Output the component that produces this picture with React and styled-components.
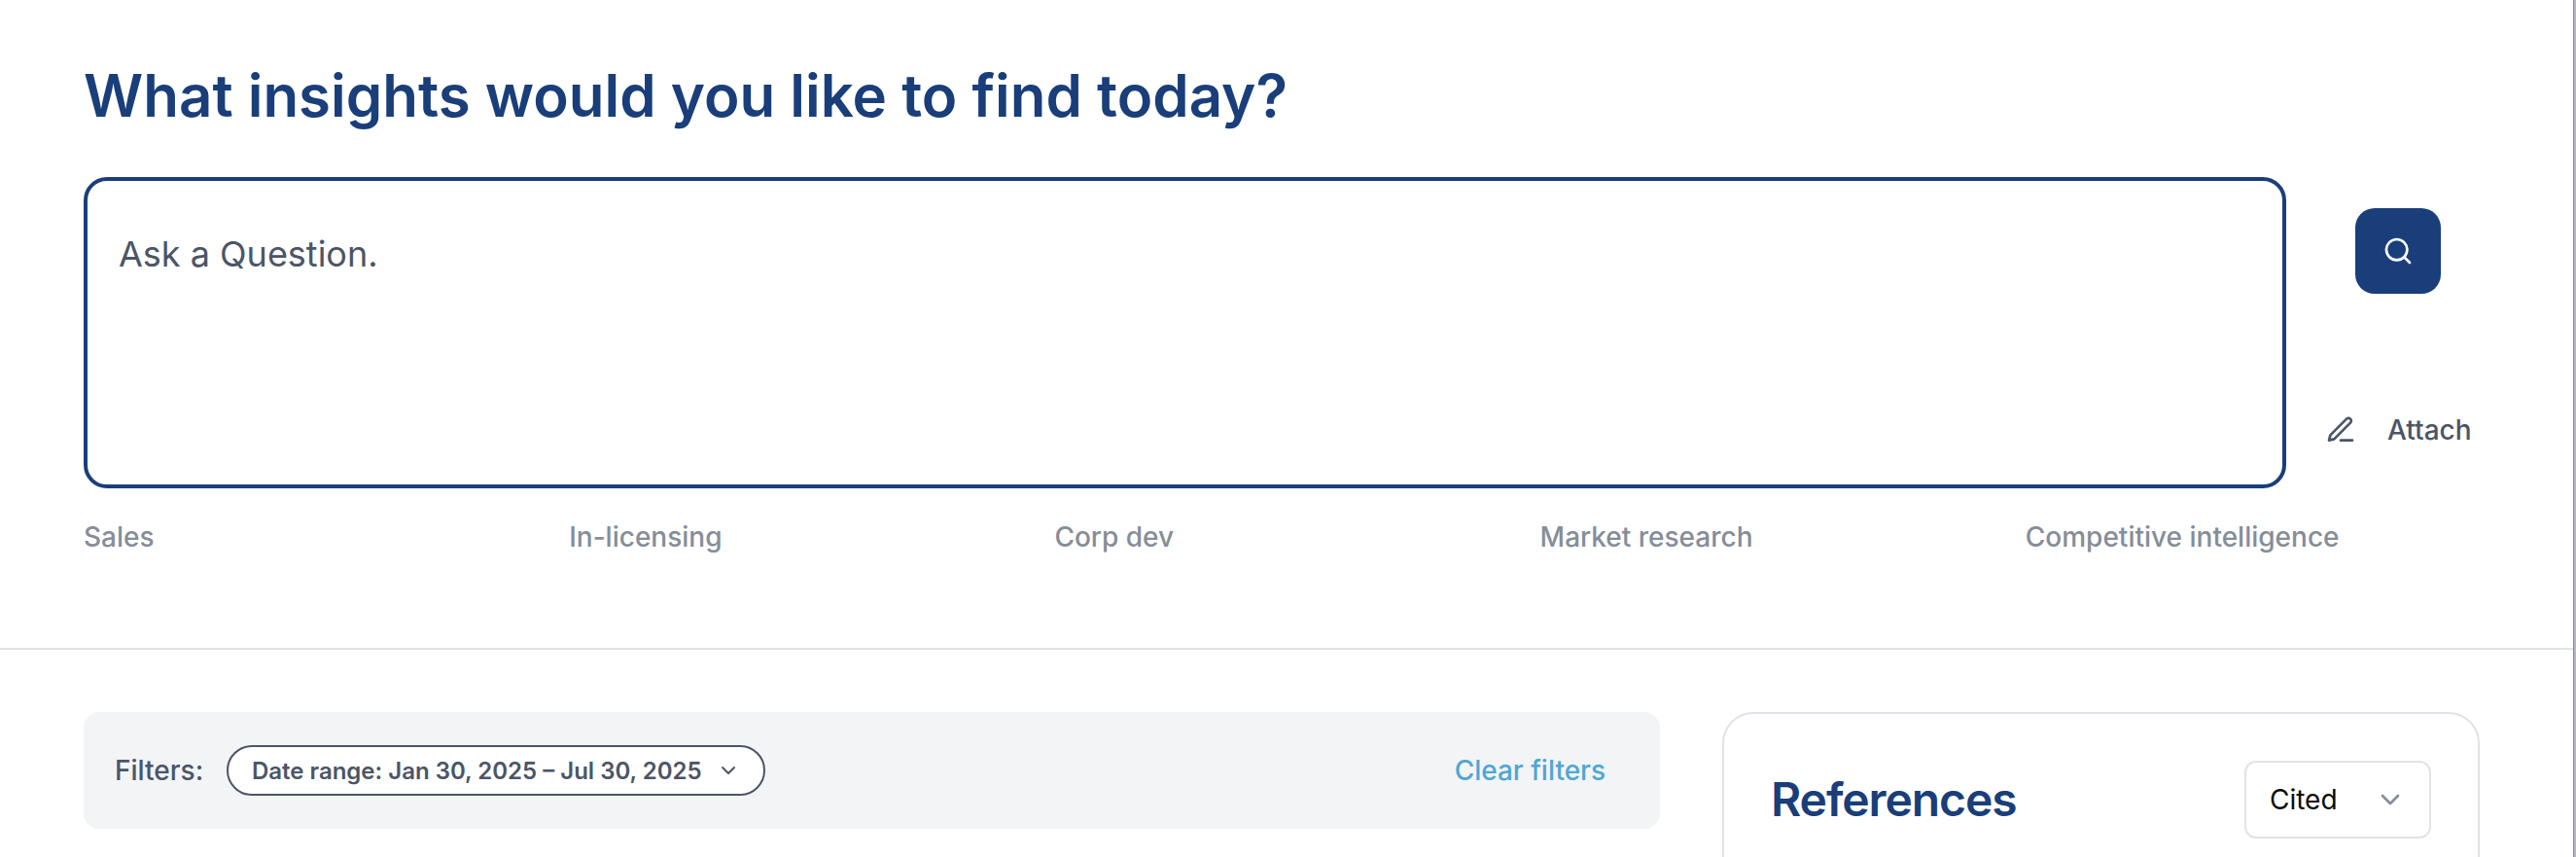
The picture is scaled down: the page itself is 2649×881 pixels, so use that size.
import React from 'react';
import styled, { createGlobalStyle } from 'styled-components';

const GlobalStyle = createGlobalStyle`
    * {
        box-sizing: border-box;
    }

    body {
        margin: 0;
        background: #FFFFFF;
        font-family: Inter, "Liberation Sans", sans-serif;
        overflow: hidden;
    }
`;

const Page = styled.div`
    height: 881px;
    overflow: hidden;
    background: #FFFFFF;
    border-right: 2px solid #B4B9C1;
`;

const PageInner = styled.div`
    height: 100%;
    border-right: 1px solid #858D99;
`;

const SearchSection = styled.section`
    height: 668px;
    padding: 62px 96px 0 86px;
    border-bottom: 2px solid #E2E3E8;
`;

const Title = styled.h1`
    margin: 0 0 48px;
    font-size: 60px;
    line-height: 72px;
    font-weight: 600;
    color: #193E7A;
`;

const SearchRow = styled.div`
    display: flex;
    gap: 40px;
`;

const QuestionBox = styled.textarea`
    display: block;
    width: 2265px;
    height: 320px;
    padding: 51px 32px;
    border: 4px solid #193E7A;
    border-radius: 24px;
    background: #FFFFFF;
    font-family: inherit;
    font-size: 36px;
    line-height: 48px;
    color: #4B5567;
    resize: none;
    outline: none;

    &::placeholder {
        color: #4B5567;
        opacity: 1;
    }
`;

const SearchActions = styled.div`
    display: flex;
    flex-direction: column;
    align-items: center;
    justify-content: space-between;
    width: 150px;
    padding: 32px 0 40px;
`;

const SearchButton = styled.button`
    display: flex;
    align-items: center;
    justify-content: center;
    width: 88px;
    height: 88px;
    padding: 0;
    border: none;
    border-radius: 20px;
    background: #193E7A;
    color: #FFFFFF;
`;

const AttachButton = styled.button`
    display: flex;
    align-items: center;
    gap: 32px;
    width: 100%;
    height: 40px;
    padding: 0;
    border: none;
    background: none;
    font-family: inherit;
    font-size: 28px;
    font-weight: 500;
    color: #4B5567;
    white-space: nowrap;
`;

const Icon = styled.svg`
    flex: none;
    width: ${props =>props.$size ? props.$size : '32px'};
    height: ${props =>props.$size ? props.$size : '32px'};
    fill: none;
    stroke: currentColor;
    stroke-width: 2;
    stroke-linecap: round;
    stroke-linejoin: round;
`;

const Topics = styled.nav`
    display: grid;
    grid-template-columns: repeat(5, 1fr);
    gap: 32px;
    margin-top: 30px;
`;

const Topic = styled.span`
    font-size: 28px;
    line-height: 40px;
    font-weight: 500;
    color: #858D99;
    white-space: nowrap;
`;

const Results = styled.section`
    display: flex;
    align-items: flex-start;
    justify-content: space-between;
    padding: 64px 96px 0 86px;
`;

const FilterBar = styled.div`
    display: flex;
    align-items: center;
    width: 1621px;
    height: 120px;
    padding: 0 56px 0 32px;
    border-radius: 16px;
    background: #F2F4F6;
`;

const FilterLabel = styled.span`
    width: 115px;
    font-size: 28px;
    font-weight: 500;
    color: #4B5567;
`;

const DatePill = styled.button`
    display: flex;
    align-items: center;
    justify-content: space-between;
    width: 554px;
    height: 52px;
    padding: 0 24px;
    border: 2px solid #4B5567;
    border-radius: 26px;
    background: #FFFFFF;
    font-family: inherit;
    font-size: 24px;
    font-weight: 600;
    color: #4B5567;
    white-space: nowrap;
`;

const ClearButton = styled.button`
    margin-left: auto;
    padding: 0;
    border: none;
    background: none;
    font-family: inherit;
    font-size: 28px;
    font-weight: 500;
    color: #50A6D4;
`;

const ReferencesCard = styled.aside`
    display: flex;
    align-items: flex-start;
    justify-content: space-between;
    width: 779px;
    height: 240px;
    padding: 48px;
    border: 2px solid #E2E3E8;
    border-radius: 32px;
`;

const CardTitle = styled.h2`
    margin: 0;
    font-size: 48px;
    line-height: 80px;
    font-weight: 600;
    letter-spacing: -1.1px;
    color: #193E7A;
`;

const Select = styled.button`
    display: flex;
    align-items: center;
    justify-content: space-between;
    width: 192px;
    height: 80px;
    padding: 0 24px;
    border: 2px solid #E2E3E8;
    border-radius: 12px;
    background: #FFFFFF;
    font-family: inherit;
    font-size: 28px;
    color: #09090B;

    svg {
        color: #858D99;
    }
`;

const topics = ['Sales', 'In-licensing', 'Corp dev', 'Market research', 'Competitive intelligence'];

const SearchIcon = () => (
    <Icon viewBox="0 0 24 24">
        <circle cx="11" cy="11" r="8" />
        <path d="m21 21-4.3-4.3" />
    </Icon>
);

const PenIcon = () => (
    <Icon viewBox="0 0 24 24">
        <path d="M12 20h9" />
        <path d="M16.5 3.5a2.121 2.121 0 0 1 3 3L7 19l-4 1 1-4Z" />
    </Icon>
);

const ChevronIcon = ({size}) => (
    <Icon viewBox="0 0 24 24" $size={size}>
        <path d="m6 9 6 6 6-6" />
    </Icon>
);

const App = () => {
    return <>
        <GlobalStyle />
        <Page>
            <PageInner>
                <SearchSection>
                    <Title>What insights would you like to find today?</Title>
                    <SearchRow>
                        <QuestionBox placeholder="Ask a Question." />
                        <SearchActions>
                            <SearchButton aria-label="Search"><SearchIcon /></SearchButton>
                            <AttachButton><PenIcon />Attach</AttachButton>
                        </SearchActions>
                    </SearchRow>
                    <Topics>
                        {topics.map(topic => <Topic key={topic}>{topic}</Topic>)}
                    </Topics>
                </SearchSection>
                <Results>
                    <FilterBar>
                        <FilterLabel>Filters:</FilterLabel>
                        <DatePill>
                            Date range: Jan 30, 2025 – Jul 30, 2025
                            <ChevronIcon size="24px" />
                        </DatePill>
                        <ClearButton>Clear filters</ClearButton>
                    </FilterBar>
                    <ReferencesCard>
                        <CardTitle>References</CardTitle>
                        <Select>
                            Cited
                            <ChevronIcon size="32px" />
                        </Select>
                    </ReferencesCard>
                </Results>
            </PageInner>
        </Page>
    </>
}

export default App;
